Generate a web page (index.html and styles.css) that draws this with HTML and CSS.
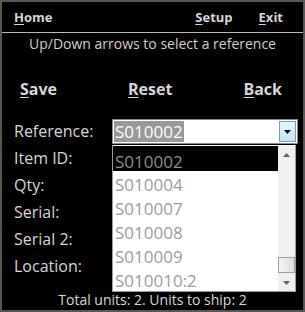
FILE: index.html
```html
<!DOCTYPE html>
<html lang="en">
<head>
    <meta charset="UTF-8">
    <title>Select reference</title>
    <link rel="stylesheet" href="styles.css">
</head>
<body>
    <div id="screen">
        <div class="topBar">
            <span class="menuLink home"><u>H</u>ome</span>
            <span class="menuLink"><u>S</u>etup</span>
            <span class="menuLink"><u>E</u>xit</span>
        </div>
        <div class="hint">Up/Down arrows to select a reference</div>
        <div class="actions">
            <span class="actionBtn"><u>S</u>ave</span>
            <span class="actionBtn"><u>R</u>eset</span>
            <span class="actionBtn"><u>B</u>ack</span>
        </div>
        <div class="form">
            <div class="label">Reference:</div>
            <div class="field">
                <div class="combo">
                    <span class="comboText">S010002</span>
                    <span class="comboBtn">
                        <svg width="7" height="4" viewBox="0 0 7 4"><path d="M0 0h7L3.5 4z" fill="#000"/></svg>
                    </span>
                </div>
                <!-- open dropdown list -->
                <div class="dropList">
                    <div class="items">
                        <div class="item selected">S010002</div>
                        <div class="item">S010004</div>
                        <div class="item">S010007</div>
                        <div class="item">S010008</div>
                        <div class="item">S010009</div>
                        <div class="item">S010010:2</div>
                    </div>
                    <div class="scrollBar">
                        <span class="arrow">
                            <svg width="7" height="4" viewBox="0 0 7 4"><path d="M0 4h7L3.5 0z" fill="#606060"/></svg>
                        </span>
                        <span class="track"><span class="thumb"></span></span>
                        <span class="arrow">
                            <svg width="7" height="4" viewBox="0 0 7 4"><path d="M0 0h7L3.5 4z" fill="#606060"/></svg>
                        </span>
                    </div>
                </div>
            </div>
            <div class="label">Item ID:</div>
            <div class="field"></div>
            <div class="label">Qty:</div>
            <div class="field"></div>
            <div class="label">Serial:</div>
            <div class="field"></div>
            <div class="label">Serial 2:</div>
            <div class="field"></div>
            <div class="label">Location:</div>
            <div class="field"></div>
        </div>
        <div class="footer">Total units: 2. Units to ship: 2</div>
    </div>
</body>
</html>
```

FILE: styles.css
```css
*{
    padding: 0;
    margin: 0;
    box-sizing: border-box;
}
body {
    background-color: #000;
    font-family: "Open Sans", "Liberation Sans", sans-serif;
    color: #d6d6d6;
}
#screen {
    width: 305px;
    height: 312px;
    border: 2px solid #575757;
    background-color: #000;
}
.topBar {
    display: flex;
    gap: 26px;
    height: 31px;
    padding: 0 20px 0 12px;
    border-bottom: 1px solid #b8b8b8;
    font-size: 13px;
    font-weight: bold;
    line-height: 30px;
}
.home {
    margin-right: auto;
}
.menuLink u, .actionBtn u {
    text-decoration-thickness: 1px;
    text-underline-offset: 2px;
}
.hint {
    text-align: center;
    font-size: 14px;
    line-height: 22px;
    color: #cfcfcf;
}
.actions {
    display: flex;
    justify-content: space-between;
    margin-top: 20px;
    padding: 0 21px 0 18px;
    font-size: 16px;
    font-weight: bold;
    line-height: 28px;
}
.form {
    display: grid;
    grid-template-columns: 98px 186px;
    grid-auto-rows: 27px;
    margin-top: 15px;
    padding-left: 12px;
}
.label {
    font-size: 16px;
    line-height: 27px;
}
.field {
    position: relative;
}
.combo {
    display: flex;
    margin-top: 1px;
    height: 25px;
    border: 1px solid #8a8a8a;
    background-color: #fff;
    padding: 1px;
}
.comboText {
    background-color: #999;
    color: #fff;
    font-size: 17px;
    line-height: 21px;
    padding: 0 1px;
}
.comboBtn {
    margin-left: auto;
    width: 17px;
    display: flex;
    align-items: center;
    justify-content: center;
    border: 1px solid #7b9ab8;
    background: linear-gradient(#eaf5fd, #c4e2f7);
}
.dropList {
    position: absolute;
    top: 27px;
    left: 0;
    width: 184px;
    height: 147px;
    display: flex;
    overflow: hidden;
    background-color: #fff;
    border: 1px solid #9a9a9a;
    border-top: none;
    padding-top: 1px;
}
.items {
    flex: 1;
}
.item {
    height: 24px;
    padding: 5px 0 0 2px;
    line-height: 19px;
    font-size: 17px;
    color: #9b9b9b;
}
.item.selected {
    height: 25px;
    padding-top: 6px;
    margin-bottom: -1px;
    background-color: #000;
    color: #8c8c8c;
}
.scrollBar {
    width: 17px;
    display: flex;
    flex-direction: column;
    background-color: #f0f0f0;
}
.arrow {
    height: 17px;
    display: flex;
    align-items: center;
    justify-content: center;
}
.track {
    flex: 1;
    position: relative;
}
.thumb {
    position: absolute;
    left: 0;
    right: 0;
    bottom: 1px;
    height: 16px;
    border: 1px solid #a0a0a0;
    background: linear-gradient(90deg, #f4f4f4, #dcdcdc);
}
.footer {
    margin-top: 12px;
    text-align: center;
    font-size: 14px;
    line-height: 15px;
}
```
